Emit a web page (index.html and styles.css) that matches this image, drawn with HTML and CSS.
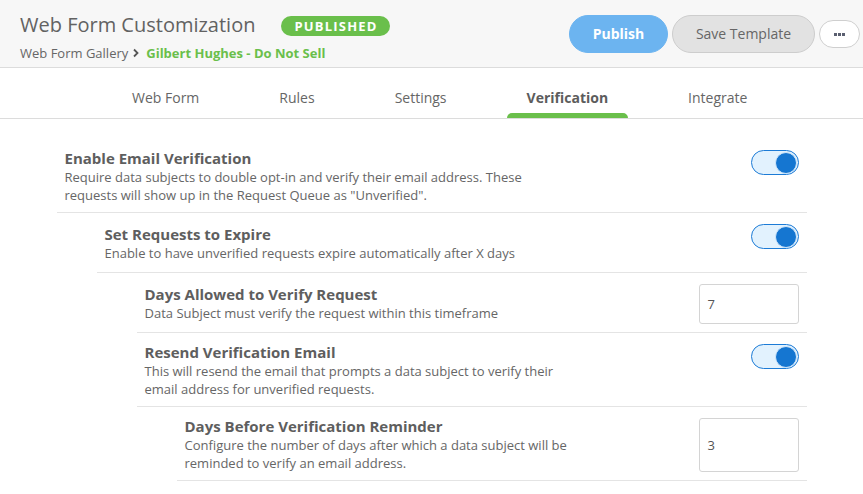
FILE: index.html
```html
<!DOCTYPE html>
<html>
<head>
<meta charset="utf-8">
<link rel="stylesheet" href="styles.css">
</head>
<body>
<header class="topbar">
  <div class="title-block">
    <div class="title-line">
      <h1 class="page-title">Web Form Customization</h1>
      <span class="badge">PUBLISHED</span>
    </div>
    <div class="crumbs">
      <span class="crumb">Web Form Gallery</span>
      <svg class="chev" width="8" height="10" viewBox="0 0 8 10"><path d="M2 1.5 L5.5 5 L2 8.5" fill="none" stroke="#555" stroke-width="1.8"/></svg>
      <span class="crumb-current">Gilbert Hughes - Do Not Sell</span>
    </div>
  </div>
  <div class="actions">
    <button class="btn btn-primary">Publish</button>
    <button class="btn btn-secondary">Save Template</button>
    <button class="btn btn-more"><span class="dot"></span><span class="dot"></span><span class="dot"></span></button>
  </div>
</header>

<nav class="tabs">
  <div class="tab">Web Form</div>
  <div class="tab">Rules</div>
  <div class="tab">Settings</div>
  <div class="tab active">Verification</div>
  <div class="tab">Integrate</div>
</nav>

<main class="settings">
  <div class="row">
    <div class="text">
      <div class="label">Enable Email Verification</div>
      <div class="desc">Require data subjects to double opt-in and verify their email address. These<br>requests will show up in the Request Queue as "Unverified".</div>
    </div>
    <div class="toggle on"><span class="knob"></span></div>
  </div>
  <div class="nest">
    <div class="row">
      <div class="text">
        <div class="label">Set Requests to Expire</div>
        <div class="desc">Enable to have unverified requests expire automatically after X days</div>
      </div>
      <div class="toggle on"><span class="knob"></span></div>
    </div>
    <div class="nest">
      <div class="row">
        <div class="text">
          <div class="label">Days Allowed to Verify Request</div>
          <div class="desc">Data Subject must verify the request within this timeframe</div>
        </div>
        <div class="field">7</div>
      </div>
    </div>
  </div>
  <div class="nest">
    <div class="nest">
      <div class="row">
        <div class="text">
          <div class="label">Resend Verification Email</div>
          <div class="desc">This will resend the email that prompts a data subject to verify their<br>email address for unverified requests.</div>
        </div>
        <div class="toggle on"><span class="knob"></span></div>
      </div>
      <div class="nest">
        <div class="row">
          <div class="text">
            <div class="label">Days Before Verification Reminder</div>
            <div class="desc">Configure the number of days after which a data subject will be<br>reminded to verify an email address.</div>
          </div>
          <div class="field">3</div>
        </div>
      </div>
    </div>
  </div>
</main>
</body>
</html>
```

FILE: styles.css
```css
* { box-sizing: border-box; }
html, body { margin: 0; padding: 0; background: #fff; }
body {
  font-family: "Open Sans", "Liberation Sans", sans-serif;
  color: #666;
  width: 863px;
  height: 494px;
  overflow: hidden;
}

.topbar {
  display: flex;
  justify-content: space-between;
  align-items: flex-start;
  background: #f7f7f7;
  border-bottom: 1px solid #dcdcdc;
  height: 68px;
  padding: 0 3px 0 20px;
}
.title-block { padding-top: 10px; }
.title-line { display: flex; align-items: center; height: 30px; }
.page-title {
  margin: 0;
  font-size: 20px;
  font-weight: 400;
  color: #626262;
  line-height: 30px;
}
.badge {
  margin-left: 26px;
  background: #6abf4b;
  color: #fff;
  font-weight: 700;
  font-size: 13px;
  letter-spacing: 1.2px;
  height: 20px;
  line-height: 20px;
  padding: 0 12px 0 13px;
  border-radius: 10px;
  margin-top: 1px;
}
.crumbs {
  display: flex;
  align-items: center;
  font-size: 13px;
  line-height: 18px;
  margin-top: 4px;
}
.crumb { color: #666; }
.chev { margin: 0 6px 0 4px; }
.crumb-current { color: #6abf4b; font-weight: 700; }

.actions { display: flex; align-items: center; gap: 4px; padding-top: 15px; }
.btn {
  font-family: inherit;
  font-size: 14px;
  height: 38px;
  border-radius: 19px;
  cursor: pointer;
  padding: 0 0 2px;
}
.btn-primary {
  background: #6cb4f0;
  border: 1px solid #6cb4f0;
  color: #fff;
  font-weight: 700;
  width: 99px;
}
.btn-secondary {
  background: #e2e2e2;
  border: 1px solid #cdcdcd;
  color: #666;
  width: 143px;
}
.btn-more {
  background: #fff;
  border: 1px solid #cfcfcf;
  width: 41px;
  height: 28px;
  border-radius: 14px;
  display: flex;
  align-items: center;
  justify-content: center;
  gap: 1px;
  padding: 0;
}
.dot { width: 3px; height: 3px; background: #5a5f70; display: block; }

.tabs {
  display: flex;
  height: 51px;
  border-bottom: 1px solid #dcdcdc;
  padding-left: 112px;
  gap: 40px;
}
.tab {
  position: relative;
  padding: 10px 20px 0;
  font-size: 14px;
  line-height: 40px;
  color: #666;
}
.tab.active { font-weight: 700; color: #5c5c5c; }
.tab.active::after {
  content: "";
  position: absolute;
  left: 0; right: 0; bottom: 0;
  height: 5px;
  background: #6abf4b;
  border-radius: 5px 5px 0 0;
}

.settings {
  width: 750px;
  margin: 20px auto 0;
}
.nest { margin-left: 40px; }
.row {
  display: flex;
  justify-content: space-between;
  align-items: center;
  min-height: 60px;
  padding: 9px 8px 8px 8px;
  border-bottom: 1px solid #e4e4e4;
}
.label {
  font-size: 15px;
  font-weight: 700;
  line-height: 20px;
  color: #5e5e5e;
}
.desc {
  font-size: 13px;
  line-height: 18px;
  color: #666;
}
.toggle {
  align-self: flex-start;
  margin-top: 2px;
  width: 48px;
  height: 25px;
  border: 1px solid #1c7bd6;
  background: #e2f2fe;
  border-radius: 13px;
  display: flex;
  align-items: center;
  justify-content: flex-end;
  padding-right: 1px;
  flex: none;
}
.knob {
  width: 22px;
  height: 22px;
  border-radius: 50%;
  background: #1576d1;
  border: 1px solid #cfe6fb;
}
.field {
  align-self: stretch;
  margin-top: 2px;
  width: 100px;
  border: 1px solid #d4d4d4;
  border-radius: 3px;
  font-size: 13px;
  color: #555;
  display: flex;
  align-items: center;
  padding-left: 8px;
  flex: none;
}
```
